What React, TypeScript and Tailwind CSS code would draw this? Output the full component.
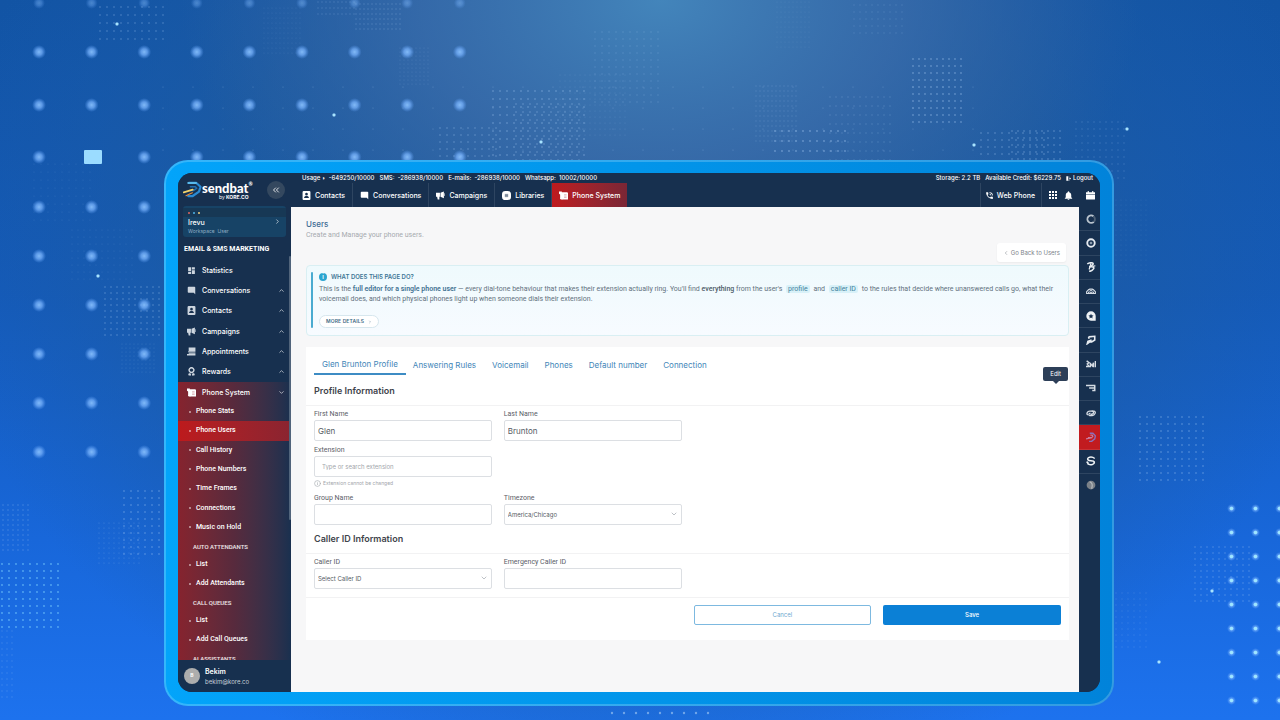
import React from 'react';
import { MdApps, MdDashboard, MdModeComment, MdNotifications, MdPhoneInTalk } from 'react-icons/md';
import { FaAward } from 'react-icons/fa';
import { ChevronDown, ChevronLeft, ChevronRight, ChevronUp, ChevronsLeft, Info } from 'lucide-react';
import clsx from 'clsx';

type IconProps = { className?: string };

/* ---------- icons ---------- */

const ContactIcon = ({ className }: IconProps) => (
  <svg viewBox="0 0 16 16" className={className} fill="currentColor">
    <path
      fillRule="evenodd"
      d="M3 0h10a2 2 0 0 1 2 2v12a2 2 0 0 1-2 2H3a2 2 0 0 1-2-2V2a2 2 0 0 1 2-2Zm5 3.2a2.4 2.4 0 1 0 0 4.8a2.4 2.4 0 0 0 0-4.8ZM3.7 12.5h8.600c0-2.300-2-3.400-4.300-3.400s-4.300 1.100-4.300 3.400Z"
    />
  </svg>
);

const MegaphoneIcon = ({ className }: IconProps) => (
  <svg viewBox="0 0 16 16" className={className} fill="currentColor">
    <path d="M0 3h7v7H0zM2 10h4v5H3zM8 3l6-2v12l-6-3zM15 4h1v5h-1z" />
  </svg>
);

const LibraryIcon = ({ className }: IconProps) => (
  <svg viewBox="0 0 16 16" className={className}>
    <rect width="16" height="16" rx="6" fill="currentColor" />
    <path d="M5 6h6M5 8h6M5 10h6" stroke="#17304f" strokeWidth="1" fill="none" />
  </svg>
);

const AppointmentIcon = ({ className }: IconProps) => (
  <svg viewBox="0 0 16 16" className={className} fill="currentColor">
    <path d="M3 1h12v6H3zM2 7.500h13v2H2zM3 10h12v2H3zM0 12.500h15v2.500H0z" />
  </svg>
);

const PhoneSystemIcon = ({ className }: IconProps) => (
  <svg viewBox="0 0 16 16" className={className}>
    <path d="M0 1h5v13H2V6L0 5zM5 2h9a2 2 0 0 1 2 2v11H5z" fill="currentColor" />
    <path d="M2 13h4v2H3z" fill="currentColor" />
    <path d="M9 6.500h4.500M9 9h4.500M9 11.500h4.500" stroke="#c98b92" strokeWidth="1" />
  </svg>
);

const CalendarIcon = ({ className }: IconProps) => (
  <svg viewBox="0 0 16 16" className={className} fill="currentColor">
    <path d="M3 0h2v2h6V0h2v2h3v4H0V2h3zM0 7h16v7a1 1 0 0 1-1 1H1a1 1 0 0 1-1-1z" />
  </svg>
);

const LogoutIcon = ({ className }: IconProps) => (
  <svg viewBox="0 0 16 16" className={className} fill="currentColor">
    <path d="M1 1h6v14H1zM8 2h3v2H8zM8 12h3v2H8zM9 7h3V4l4 4-4 4V9H9z" />
  </svg>
);

const LogoMark = ({ className }: IconProps) => (
  <svg viewBox="0 0 51 51" className={className} fill="none" strokeLinejoin="round" strokeLinecap="round">
    <path d="M16 8h20l11 10-4 13-17 12H14" stroke="#2b8ad2" strokeWidth="6" />
    <path d="M20 18h13l4 4-8 6H18" stroke="#256fae" strokeWidth="4" />
    <path d="M14 8h21" stroke="#58b9ec" strokeWidth="5" />
    <path d="M2 33l24-7" stroke="#f3d26a" strokeWidth="5" />
    <path d="M8 42l17-8" stroke="#e58a3c" strokeWidth="3" />
  </svg>
);

/* glyphs of the product switcher on the right edge */
const railIcons: { name: string; glyph: React.ReactNode; active?: boolean }[] = [
  {
    name: 'Ring',
    glyph: (
      <>
        <path d="M12.500 12.500A6 6 0 1 1 12 3.500" stroke="#b9c3cd" strokeWidth="3" />
        <path d="M12 3.500a6 6 0 0 1 .5 9" stroke="#4d5f74" strokeWidth="3" />
      </>
    ),
  },
  {
    name: 'Target',
    glyph: (
      <>
        <circle cx="8" cy="8" r="6" stroke="#e6ebf0" strokeWidth="3" />
        <path d="M6 8h4M8 6v4" stroke="#b9c6d3" strokeWidth="1.500" />
      </>
    ),
  },
  {
    name: 'Bookings',
    glyph: (
      <>
        <path d="M2 3c5-3 11-2 9 1S7 8 5 8c5-1 9 0 7 3s-4 4-7 4" stroke="#e6ebf0" strokeWidth="2.500" />
        <path d="M8 2L5 12M11 7l4-1" stroke="#e6ebf0" strokeWidth="2" />
      </>
    ),
  },
  {
    name: 'Community',
    glyph: (
      <>
        <path d="M1 12V9l3-3 2-1h4l2 1 3 3v3z" stroke="#d5dce4" strokeWidth="1.800" />
        <path d="M4 12V9.500h3V12M9 12V9.500h3V12M6 7h4" stroke="#d5dce4" strokeWidth="1.500" />
      </>
    ),
  },
  {
    name: 'Reviews',
    glyph: (
      <>
        <path d="M15.500 15.500H8A7.500 7.500 0 1 1 15.500 8z" fill="#eef2f5" />
        <path d="M8 4.200l1.200 2.600 2.800.3-2 2 .5 2.800L8 10.500l-2.500 1.400.5-2.800-2-2 2.800-.3z" fill="#17304f" />
      </>
    ),
  },
  {
    name: 'Payments',
    glyph: <path d="M4 3l10-1v6l-5 3H6l-4 3 1-4 6-2M4 3l1 3" stroke="#e6ebf0" strokeWidth="2.500" />,
  },
  {
    name: 'Statistics',
    glyph: (
      <path d="M1 3l4 3-3 2 3 4H0M7 13V6M7 7l3 4 2-5v7M15 13V3" stroke="#d5dce4" strokeWidth="2.200" />
    ),
  },
  {
    name: 'Filters',
    glyph: <path d="M0 4h15M5 8h10M10 12h5M14 4v9" stroke="#d5dce4" strokeWidth="2.400" />,
  },
  {
    name: 'Links',
    glyph: (
      <>
        <path d="M3 11c-3-1-1-6 3-6h4c3 0 3 5-1 5H7" stroke="#d5dce4" strokeWidth="2.200" />
        <path d="M9 5h4c4 1 1 7-3 7H6c-2 0-2-4 1-4" stroke="#d5dce4" strokeWidth="2" />
      </>
    ),
  },
  {
    name: 'Sendbat',
    active: true,
    glyph: (
      <>
        <path d="M6 2h5l4 4-1 5-5 4H5" stroke="#8c6fb8" strokeWidth="2.200" />
        <path d="M7 5h3l1 2-2 2H3M0 11l10-2" stroke="#c97a9c" strokeWidth="1.800" />
      </>
    ),
  },
  {
    name: 'Sync',
    glyph: (
      <path
        d="M14 4C9 0 1 2 3 6c2 3 9 0 10 4M2 12c5 4 13 1 11-3-2-3-9 0-10-3M1 9l3 3"
        stroke="#eef2f5"
        strokeWidth="2.400"
      />
    ),
  },
  {
    name: 'Profile',
    glyph: (
      <>
        <circle cx="8" cy="8" r="7" fill="#7b8188" />
        <path d="M6 3c4 1 5 5 3 11" stroke="#b3b7bb" strokeWidth="2" />
      </>
    ),
  },
];

/* ---------- backdrop ---------- */

interface DotField {
  x: number;
  y: number;
  cols: number;
  rows: number;
  dx: number;
  dy: number;
  r: number;
  opacity: number;
  color?: string;
}

const dotFields: DotField[] = [
  { x: 100, y: 7, cols: 10, rows: 5, dx: 7, dy: 8, r: 0.8, opacity: 0.4 },
  { x: 264, y: 8, cols: 10, rows: 10, dx: 4, dy: 5, r: 0.6, opacity: 0.14 },
  { x: 318, y: 2, cols: 10, rows: 3, dx: 4, dy: 6, r: 0.7, opacity: 0.25 },
  { x: 356, y: 4, cols: 12, rows: 6, dx: 4, dy: 5, r: 0.7, opacity: 0.28 },
  { x: 400, y: 48, cols: 8, rows: 10, dx: 4, dy: 4, r: 0.6, opacity: 0.2 },
  { x: 440, y: 128, cols: 9, rows: 6, dx: 7, dy: 7, r: 0.8, opacity: 0.4 },
  { x: 493, y: 91, cols: 14, rows: 10, dx: 7, dy: 8, r: 0.8, opacity: 0.5 },
  { x: 516, y: 104, cols: 10, rows: 8, dx: 7, dy: 8, r: 0.8, opacity: 0.4 },
  { x: 560, y: 75, cols: 14, rows: 11, dx: 5, dy: 6, r: 0.6, opacity: 0.2 },
  { x: 595, y: 32, cols: 10, rows: 11, dx: 7, dy: 7, r: 0.7, opacity: 0.25 },
  { x: 777, y: 2, cols: 9, rows: 10, dx: 4, dy: 5, r: 0.6, opacity: 0.14 },
  { x: 854, y: 5, cols: 9, rows: 5, dx: 6, dy: 7, r: 0.7, opacity: 0.2 },
  { x: 756, y: 86, cols: 11, rows: 12, dx: 4, dy: 5, r: 0.7, opacity: 0.2 },
  { x: 775, y: 131, cols: 11, rows: 7, dx: 7, dy: 10, r: 0.9, opacity: 0.45 },
  { x: 830, y: 97, cols: 11, rows: 9, dx: 6, dy: 9, r: 0.8, opacity: 0.22 },
  { x: 913, y: 59, cols: 9, rows: 10, dx: 6, dy: 7, r: 0.9, opacity: 0.4 },
  { x: 981, y: 161, cols: 10, rows: 5, dx: 7, dy: -7, r: 0.8, opacity: 0.45 },
  { x: 1012, y: 131, cols: 9, rows: 9, dx: 6, dy: 7, r: 0.8, opacity: 0.45 },
  { x: 1076, y: 122, cols: 9, rows: 9, dx: 6, dy: 7, r: 0.7, opacity: 0.25 },
  { x: 34, y: 164, cols: 9, rows: 8, dx: 7, dy: 8, r: 0.6, opacity: 0.16 },
  { x: 72, y: 230, cols: 11, rows: 8, dx: 6, dy: 7, r: 0.6, opacity: 0.16 },
  { x: 105, y: 287, cols: 10, rows: 9, dx: 6, dy: 6, r: 0.8, opacity: 0.4 },
  { x: 122, y: 344, cols: 9, rows: 8, dx: 4, dy: 4, r: 0.6, opacity: 0.2 },
  { x: 124, y: 491, cols: 6, rows: 10, dx: 7, dy: 7, r: 0.8, opacity: 0.5 },
  { x: 99, y: 523, cols: 9, rows: 9, dx: 5, dy: 5, r: 0.6, opacity: 0.3 },
  { x: 3, y: 505, cols: 6, rows: 10, dx: 5, dy: 5, r: 0.7, opacity: 0.35 },
  { x: 2, y: 564, cols: 9, rows: 10, dx: 7, dy: 7, r: 0.9, opacity: 0.6, color: '#7fd4ff' },
  { x: 2, y: 631, cols: 3, rows: 12, dx: 5, dy: 6, r: 0.7, opacity: 0.25 },
  { x: 1140, y: 417, cols: 10, rows: 10, dx: 7, dy: 7, r: 0.8, opacity: 0.5 },
  { x: 1195, y: 547, cols: 10, rows: 10, dx: 6, dy: 6, r: 0.8, opacity: 0.35 },
  { x: 1116, y: 593, cols: 6, rows: 10, dx: 6, dy: 6, r: 0.7, opacity: 0.18 },
  { x: 1116, y: 200, cols: 7, rows: 16, dx: 5, dy: 5, r: 0.6, opacity: 0.14 },
  // wide sparse mesh behind everything
  { x: 163, y: 87, cols: 28, rows: 4, dx: 30, dy: 21, r: 0.6, opacity: 0.35 },
  { x: 612, y: 713, cols: 9, rows: 1, dx: 12, dy: 1, r: 1.2, opacity: 0.6 },
];

const dots = ({ x, y, cols, rows, dx, dy }: DotField) =>
  Array.from({ length: cols * rows }, (_, i) => [x + (i % cols) * dx, y + Math.floor(i / cols) * dy]);

const sparkles = [
  [117, 24],
  [334, 115],
  [541, 142],
  [98, 276],
  [1212, 591],
  [1159, 662],
  [1127, 129],
  [974, 145],
];

const Backdrop = () => (
  <svg
    className="absolute inset-0 h-full w-full"
    viewBox="0 0 1280 720"
    preserveAspectRatio="xMidYMid slice"
    aria-hidden="true"
  >
    <defs>
      <linearGradient id="base" x1="0" y1="0" x2="0" y2="1">
        <stop offset="0" stopColor="#1254a4" />
        <stop offset="0.4" stopColor="#145ab8" />
        <stop offset="0.75" stopColor="#1867da" />
        <stop offset="1" stopColor="#1d72ee" />
      </linearGradient>
      <radialGradient id="shade" cx="0.5" cy="0.5" r="0.5">
        <stop offset="0" stopColor="#275f9a" />
        <stop offset="0.6" stopColor="#1e5b9f" stopOpacity="0.75" />
        <stop offset="1" stopColor="#1a5cae" stopOpacity="0" />
      </radialGradient>
      <radialGradient id="glow" cx="0.5" cy="0.5" r="0.5">
        <stop offset="0" stopColor="#4385bb" />
        <stop offset="0.5" stopColor="#3c6eac" stopOpacity="0.75" />
        <stop offset="1" stopColor="#3565a5" stopOpacity="0" />
      </radialGradient>
      <radialGradient id="orb">
        <stop offset="0" stopColor="#8cc4ff" stopOpacity="0.9" />
        <stop offset="0.45" stopColor="#79b4ff" stopOpacity="0.7" />
        <stop offset="1" stopColor="#5f9ff5" stopOpacity="0" />
      </radialGradient>
    </defs>
    <rect width="1280" height="720" fill="url(#base)" />
    <ellipse cx="640" cy="240" rx="700" ry="560" fill="url(#shade)" />
    <ellipse cx="660" cy="0" rx="480" ry="330" fill="url(#glow)" />

    {dotFields.map((field, i) => (
      <g key={i} fill={field.color ?? '#a9cdf5'} opacity={field.opacity}>
        {dots(field).map(([cx, cy]) => (
          <circle key={`${cx}-${cy}`} cx={cx} cy={cy} r={field.r} />
        ))}
      </g>
    ))}

    {Array.from({ length: 9 }, (_, col) => (
      <g key={col} fill="url(#orb)">
        <circle cx={39 + col * 52.6} cy={3} r={6} opacity={0.5} />
        <circle cx={39 + col * 52.6} cy={52} r={7} />
        <circle cx={39 + col * 52.6} cy={105} r={7} />
        <circle cx={39 + col * 52.6} cy={157} r={7} />
      </g>
    ))}
    {Array.from({ length: 18 }, (_, i) => (
      <circle key={i} cx={39 + (i % 3) * 52.6} cy={207 + Math.floor(i / 3) * 49} r={7} fill="url(#orb)" />
    ))}
    <rect x="84" y="150" width="18" height="14" rx="1" fill="#9bdcff" />

    {Array.from({ length: 27 }, (_, i) => {
      const cx = 1231.5 + (i % 3) * 24;
      const cy = 508.5 + Math.floor(i / 3) * 24;
      return (
        <g key={i}>
          <circle cx={cx} cy={cy} r="4.500" fill="url(#orb)" />
          <circle cx={cx} cy={cy} r="1.800" fill="#9fe6ff" />
        </g>
      );
    })}
    {sparkles.map(([x, y]) => (
      <rect key={x} x={x - 1.5} y={y - 1.5} width="3" height="3" rx="1" fill="#a8e4ff" />
    ))}
  </svg>
);

/* ---------- sidebar ---------- */

const menu = [
  { label: 'Statistics', icon: MdDashboard, expandable: false },
  { label: 'Conversations', icon: MdModeComment, expandable: true },
  { label: 'Contacts', icon: ContactIcon, expandable: true },
  { label: 'Campaigns', icon: MegaphoneIcon, expandable: true },
  { label: 'Appointments', icon: AppointmentIcon, expandable: true },
  { label: 'Rewards', icon: FaAward, expandable: true },
];

const phoneMenu = [
  'Phone Stats',
  'Phone Users',
  'Call History',
  'Phone Numbers',
  'Time Frames',
  'Connections',
  'Music on Hold',
];

const SubItem = ({ label, active }: { label: string; active?: boolean }) => (
  <a
    href="#"
    className={clsx(
      "flex flex-1 items-center gap-[5px] pl-[11px] font-['Roboto'] text-[7px] leading-none font-medium whitespace-nowrap text-white",
      active && 'bg-linear-to-r from-[#bd1a1c] to-[#8a2430]'
    )}
  >
    <span className="h-[2px] w-[2px] rounded-full bg-white/60" />
    {label}
  </a>
);

const SubHeading = ({ children }: { children: React.ReactNode }) => (
  <div className="flex h-[18px] shrink-0 items-end pb-[5px] pl-[15px] font-['Roboto'] text-[6px] leading-none font-medium whitespace-nowrap text-white/90">
    {children}
  </div>
);

const Sidebar = () => (
  <aside className="relative flex w-[113px] shrink-0 flex-col bg-[#17304f] text-white">
    <div className="flex h-[33px] shrink-0 items-center justify-between pr-[6px] pl-[5px]">
      <div className="flex items-center">
        <LogoMark className="h-[19px] w-[19px]" />
        <div className="flex flex-col items-end pt-[2px]">
          <div className="flex font-['Lato'] text-[13px] leading-[12px] font-black">
            sendbat<span className="text-[5px] leading-[5px]">®</span>
          </div>
          <div className="pr-1 text-[5px] leading-[6px] font-bold">
            <span className="font-normal">by</span> KORE.CO
          </div>
        </div>
      </div>
      <button
        aria-label="Collapse menu"
        className="flex h-[18px] w-[18px] items-center justify-center rounded-full bg-[#34485f]"
      >
        <ChevronsLeft size={10} />
      </button>
    </div>

    <button className="mx-[5px] block h-[31px] shrink-0 overflow-hidden rounded-[3px] bg-[#174366] text-left">
      <span className="flex h-[9px] items-center gap-[3px] bg-[#173855] pl-[5px]">
        <span className="h-[2px] w-[2px] rounded-full bg-[#e0665f]" />
        <span className="h-[2px] w-[2px] rounded-full bg-[#4fb3e8]" />
        <span className="h-[2px] w-[2px] rounded-full bg-[#f0d080]" />
      </span>
      <span className="flex items-start justify-between px-[5px] pt-px">
        <span>
          <span className="block text-[7px] leading-[10px] font-medium">Irevu</span>
          <span className="block text-[5px] leading-[7px] text-[#8fadc4]">Workspace&nbsp; User</span>
        </span>
        <ChevronRight size={7} />
      </span>
    </button>

    <h2 className="shrink-0 pt-2 pl-[6px] font-['Roboto'] text-[7px] leading-[9px] font-bold whitespace-nowrap">
      EMAIL &amp; SMS MARKETING
    </h2>

    <nav className="mt-[6px] flex min-h-0 flex-1 flex-col overflow-hidden">
      <div className="flex h-[122px] shrink-0 flex-col">
        {menu.map(({ label, icon: Icon, expandable }) => (
          <a
            key={label}
            href="#"
            className="flex flex-1 items-center gap-[6px] pr-[6px] pl-[9px] text-[7px] leading-none font-medium"
          >
            <Icon className="h-[9px] w-[9px] text-[#cdd5de]" />
            <span className="flex-1">{label}</span>
            {expandable && <ChevronUp size={7} />}
          </a>
        ))}
      </div>
      <div className="shrink-0 bg-linear-to-r from-[#86232e] via-[#572a3d] to-[#19304f]">
        <a
          href="#"
          className="flex h-5 items-center gap-[6px] pr-[6px] pl-[9px] text-[7px] leading-none font-medium"
        >
          <PhoneSystemIcon className="h-[9px] w-[9px]" />
          <span className="flex-1">Phone System</span>
          <ChevronDown size={7} />
        </a>
        <div className="flex h-[135px] flex-col">
          {phoneMenu.map((label) => (
            <SubItem key={label} label={label} active={label === 'Phone Users'} />
          ))}
        </div>
        <SubHeading>AUTO ATTENDANTS</SubHeading>
        <div className="flex h-[38px] flex-col">
          <SubItem label="List" />
          <SubItem label="Add Attendants" />
        </div>
        <SubHeading>CALL QUEUES</SubHeading>
        <div className="flex h-[38px] flex-col">
          <SubItem label="List" />
          <SubItem label="Add Call Queues" />
        </div>
        <SubHeading>AI ASSISTANTS</SubHeading>
      </div>
    </nav>
    <div className="absolute top-[83px] right-0 h-[264px] w-[2px] rounded-full bg-[#51647b]" />

    <div className="flex h-8 shrink-0 items-center gap-[5px] pl-[6px]">
      <span className="flex h-4 w-4 items-center justify-center rounded-full bg-[#adadad] text-[5px] font-bold">
        B
      </span>
      <div>
        <div className="text-[7px] leading-[10px] font-semibold">Bekim</div>
        <div className="text-[6px] leading-[9px] text-[#c5ced8]">bekim@kore.co</div>
      </div>
    </div>
  </aside>
);

/* ---------- header ---------- */

const topTabs = [
  { label: 'Contacts', icon: ContactIcon },
  { label: 'Conversations', icon: MdModeComment },
  { label: 'Campaigns', icon: MegaphoneIcon },
  { label: 'Libraries', icon: LibraryIcon },
  { label: 'Phone System', icon: PhoneSystemIcon, active: true },
];

const Header = () => (
  <header className="h-[34px] shrink-0 bg-[#17304f] text-white">
    <div className="flex h-[10px] items-center justify-between pr-[7px] pl-[11px] text-[6px] leading-none font-medium whitespace-nowrap">
      <div className="flex gap-[5px]">
        <span>Usage ◗&nbsp; -649250/10000</span>
        <span>SMS:&nbsp; -286938/10000</span>
        <span>E-mails:&nbsp; -286938/10000</span>
        <span>Whatsapp:&nbsp; 10002/10000</span>
      </div>
      <div className="flex items-center gap-[5px]">
        <span>Storage: 2.2 TB</span>
        <span>Available Credit: $6229.75</span>
        <a href="#" className="flex items-center gap-[2px]">
          <LogoutIcon className="h-[5px] w-[5px]" />
          Logout
        </a>
      </div>
    </div>
    <div className="flex h-6 items-stretch justify-between text-[7px] leading-none font-medium">
      <nav className="flex pl-[4px]">
        {topTabs.map(({ label, icon: Icon, active }) => (
          <a
            key={label}
            href="#"
            className={clsx(
              'flex items-center gap-[4px] px-[7px] whitespace-nowrap',
              active ? 'bg-linear-to-r from-[#bf1a1d] to-[#7a2635]' : 'border-r border-white/10'
            )}
          >
            <Icon className="h-[9px] w-[9px]" />
            {label}
          </a>
        ))}
      </nav>
      <div className="flex">
        <button className="flex items-center gap-[3px] border-x border-white/10 pr-[6px] pl-[4px]">
          <MdPhoneInTalk size={9} />
          Web Phone
        </button>
        <button aria-label="Apps" className="flex w-[21px] items-center justify-center">
          <MdApps size={12} />
        </button>
        <button aria-label="Notifications" className="flex w-[16px] items-center justify-start">
          <MdNotifications size={11} />
        </button>
        <button aria-label="Calendar" className="flex w-[21px] items-center justify-center pl-[2px]">
          <CalendarIcon className="h-[9px] w-[9px]" />
        </button>
      </div>
    </div>
  </header>
);

const Rail = () => (
  <aside className="w-[21px] shrink-0 bg-[#17304f]">
    <div className="flex h-[290px] flex-col">
      {railIcons.map(({ name, glyph, active }) => (
        <button
          key={name}
          aria-label={name}
          className={clsx(
            'flex flex-1 items-center justify-center border-b border-white/10 pl-[2px] last:border-b-0',
            active && 'bg-[#c11b1f]'
          )}
        >
          <svg viewBox="0 0 16 16" className="h-[10px] w-[10px]" fill="none">
            {glyph}
          </svg>
        </button>
      ))}
    </div>
  </aside>
);

/* ---------- content ---------- */

const Callout = () => (
  <section className="flex gap-[6px] rounded-[4px] border border-[#d9eff3] bg-linear-to-b from-[#effafd] to-[#f7fbff] px-[4px] pt-[6px] pb-[7px]">
    <div className="w-[2px] shrink-0 rounded-full bg-[#4aabd0]" />
    <div className="min-w-0">
      <h2 className="flex items-center gap-[4px] text-[6px] leading-[9px] font-semibold text-[#3d7695]">
        <span className="flex h-2 w-2 items-center justify-center rounded-full bg-[#2ba5d0] text-[6px] text-white">
          i
        </span>
        WHAT DOES THIS PAGE DO?
      </h2>
      <p className="mt-[3px] font-['Roboto'] text-[7px] leading-[10px] text-[#62717d]">
        This is the <strong className="font-semibold text-[#3f7191]">full editor for a single phone user</strong> —
        every dial-tone behaviour that makes their extension actually ring. You'll find{' '}
        <span className="font-medium text-[#4c5b67]">everything</span> from the user's{' '}
        <span className="mx-[2px] rounded-[2px] bg-[#d8f1f8] px-[2px] text-[#43819d]">profile</span> and{' '}
        <span className="mx-[2px] rounded-[2px] bg-[#d8f1f8] px-[2px] text-[#43819d]">caller ID</span> to the rules
        that decide where unanswered calls go, what their
        <br />
        voicemail does, and which physical phones light up when someone dials their extension.
      </p>
      <button className="mt-[11px] flex h-[13px] items-center gap-[4px] rounded-full border border-[#d7e7ee] bg-white px-[6px] text-[5px] leading-none font-semibold tracking-wide text-[#3f6b86]">
        MORE DETAILS <ChevronRight size={4} />
      </button>
    </div>
  </section>
);

const tabs = ['Answering Rules', 'Voicemail', 'Phones', 'Default number', 'Connection'];

const fieldStyle =
  'block h-[21px] w-full appearance-none rounded-[2px] border border-[#dcdfe3] bg-white text-[#555b63] outline-none';

interface FieldProps {
  id: string;
  label: string;
  children: React.ReactNode;
}

const Field = ({ id, label, children }: FieldProps) => (
  <div>
    <label htmlFor={id} className="mb-px block font-['Roboto'] text-[7px] leading-[9px] text-[#5b6067]">
      {label}
    </label>
    {children}
  </div>
);

const SelectField = ({ id, label, value }: { id: string; label: string; value: string }) => (
  <Field id={id} label={label}>
    <div className="relative">
      <select id={id} defaultValue={value} className={clsx(fieldStyle, 'pr-4 pl-[3px] text-[6px]')}>
        <option>{value}</option>
      </select>
      <ChevronDown size={8} className="absolute top-[6px] right-[4px] text-[#9da3aa]" />
    </div>
  </Field>
);

const SectionTitle = ({ children }: { children: React.ReactNode }) => (
  <h3 className="text-[9px] leading-[12px] font-semibold text-[#3f444c]">{children}</h3>
);

const ProfileCard = () => (
  <form className="relative mt-[11px] bg-white pb-[15px]" onSubmit={(e) => e.preventDefault()}>
    <div className="flex h-[28px] items-end px-2 text-[8px] leading-none text-[#4286b8]">
      <button type="button" className="h-[17px] border-b-2 border-[#3d8cc4] px-2 pb-[4px]">
        Glen Brunton Profile
      </button>
      <div className="flex h-[17px] items-center gap-4 pb-1 pl-[7px]">
        {tabs.map((tab) => (
          <button key={tab} type="button">
            {tab}
          </button>
        ))}
      </div>
    </div>

    <div
      role="tooltip"
      className="absolute top-5 right-px rounded-[2px] bg-[#2d3f58] px-[7px] py-[3px] text-[6px] leading-2 text-white"
    >
      Edit
      <span className="absolute top-full left-1/2 -translate-x-1/2 border-x-3 border-t-3 border-x-transparent border-t-[#2d3f58]" />
    </div>

    <div className="px-2 pt-[10px] pb-2">
      <SectionTitle>Profile Information</SectionTitle>
    </div>
    <div className="grid grid-cols-4 gap-x-3 border-t border-[#f2f2f3] px-2 pt-[4px]">
      <Field id="first-name" label="First Name">
        <input id="first-name" defaultValue="Glen" className={clsx(fieldStyle, 'px-[3px] text-[8px]')} />
      </Field>
      <Field id="last-name" label="Last Name">
        <input id="last-name" defaultValue="Brunton" className={clsx(fieldStyle, 'px-[3px] text-[8px]')} />
      </Field>
      <div className="col-start-1 mt-[5px]">
        <Field id="extension" label="Extension">
          <input
            id="extension"
            placeholder="Type or search extension"
            className={clsx(fieldStyle, 'px-[7px] text-[6px] placeholder:text-[#a1a5ab]')}
          />
        </Field>
        <p className="mt-[2px] flex items-center gap-[2px] text-[5px] leading-2 text-[#a1a5ab]">
          <Info size={7} />
          Extension cannot be changed
        </p>
      </div>
      <div className="col-start-1 mt-[7px]">
        <Field id="group-name" label="Group Name">
          <input id="group-name" className={clsx(fieldStyle, 'px-[3px] text-[8px]')} />
        </Field>
      </div>
      <div className="mt-[7px]">
        <SelectField id="timezone" label="Timezone" value="America/Chicago" />
      </div>
    </div>

    <div className="px-2 py-2">
      <SectionTitle>Caller ID Information</SectionTitle>
    </div>
    <div className="grid grid-cols-4 gap-x-3 border-t border-b border-[#f2f2f3] px-2 pt-[4px] pb-2">
      <SelectField id="caller-id" label="Caller ID" value="Select Caller ID" />
      <Field id="emergency" label="Emergency Caller ID">
        <input id="emergency" className={clsx(fieldStyle, 'px-[3px] text-[8px]')} />
      </Field>
    </div>

    <div className="grid grid-cols-4 gap-x-3 px-2 pt-[7px] text-[6px] leading-none">
      <button
        type="button"
        className="col-start-3 h-5 rounded-[2px] border border-[#7db9e0] bg-white text-[#6fa9cf]"
      >
        Cancel
      </button>
      <button type="submit" className="h-5 rounded-[2px] bg-[#0b80d6] font-medium text-white">
        Save
      </button>
    </div>
  </form>
);

export default function App() {
  return (
    <div className="relative flex h-screen flex-col overflow-hidden bg-[#1559b5] pt-40 pr-[166px] pb-[14px] pl-[164px] font-['Inter',sans-serif]">
      <Backdrop />
      <div className="relative flex min-h-0 flex-1 rounded-[24px] border-2 border-white/20 bg-linear-to-r from-[#03a4fa] via-[#0295ea] to-[#0183da] bg-origin-border px-3 pt-[11px] pb-3">
        <div className="flex min-w-0 flex-1 overflow-hidden rounded-[14px] bg-[#17304f]">
          <Sidebar />
          <div className="flex min-w-0 flex-1 flex-col">
            <Header />
            <div className="flex min-h-0 flex-1">
              <main className="min-w-0 flex-1 overflow-hidden bg-[#f7f7f8] pt-[11px] pr-[10px] pl-[15px]">
                <h1 className="text-[8px] leading-[12px] font-medium text-[#3e6c94]">Users</h1>
                <p className="font-['Roboto'] text-[7px] leading-[11px] text-[#a6aaaf]">
                  Create and Manage your phone users.
                </p>
                <div className="mt-[2px] mb-[3px] flex justify-end pr-[3px]">
                  <a
                    href="#"
                    className="flex h-[19px] items-center gap-[2px] rounded-[3px] bg-white px-[6px] text-[6px] leading-none text-[#7c8289] shadow-xs"
                  >
                    <ChevronLeft size={6} />
                    Go Back to Users
                  </a>
                </div>
                <Callout />
                <ProfileCard />
              </main>
              <Rail />
            </div>
          </div>
        </div>
      </div>
    </div>
  );
}
